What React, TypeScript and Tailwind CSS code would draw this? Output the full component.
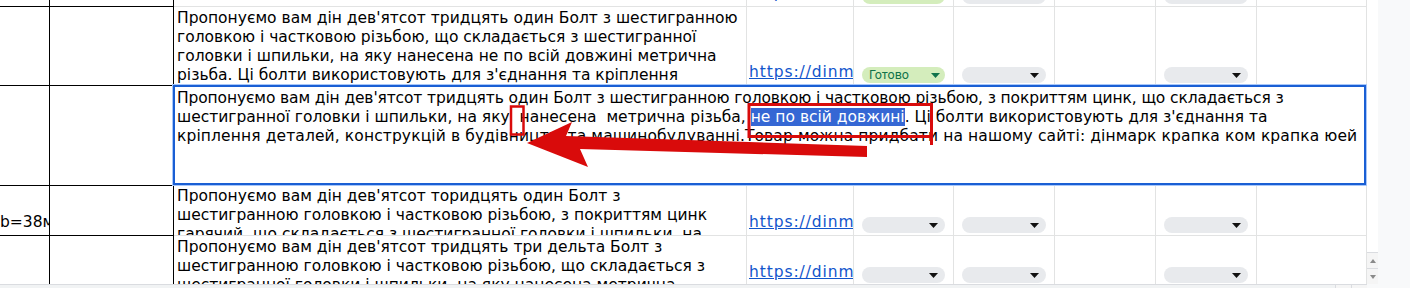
import React from "react";

const GRID = "border-[#e2e3e3]";

function GreenChip() {
  return (
    <div className="mx-[8px] mb-[2px] h-[16px] rounded-full bg-[#d4edbc] flex items-center justify-between pl-[7px] pr-[5px] font-['Roboto',sans-serif] text-[12.5px] leading-[16px] text-[#11734b]">
      <span>Готово</span>
      <svg width="9" height="5" viewBox="0 0 9 5">
        <path d="M0 0h9L4.5 5z" fill="#11734b" />
      </svg>
    </div>
  );
}

function GreyChip() {
  return (
    <div className="mx-[8px] mb-[2px] h-[16px] rounded-full bg-[#e8eaed] flex items-center justify-end pr-[7px]">
      <svg width="9" height="5" viewBox="0 0 9 5">
        <path d="M0 0h9L4.5 5z" fill="#111" />
      </svg>
    </div>
  );
}

type RowProps = {
  h: string;
  lines: string[];
  a?: string;
  green?: boolean;
  extra?: string;
  padTop?: string;
};

function Row({ h, lines, a, green, extra, padTop }: RowProps) {
  return (
    <div className={`flex shrink-0 ${h} ${extra ?? ""}`}>
      <div className="w-[50px] shrink-0 border-r border-b border-black overflow-hidden flex items-end pb-[3px]">
        {a ? <span className="whitespace-nowrap">{a}</span> : null}
      </div>
      <div className="w-[124px] shrink-0 border-r border-b border-black" />
      <div className={`w-[573px] shrink-0 border-r border-b ${GRID} overflow-hidden pl-[3px] ${padTop ?? "pt-[2px]"}`}>
        {lines.map((l, i) => (
          <div key={i} className="whitespace-pre">
            {l}
          </div>
        ))}
      </div>
      <div className={`w-[107px] shrink-0 border-r border-b ${GRID} overflow-hidden flex items-end pb-[3px] pl-[2px]`}>
        <span className="text-[#1155cc] underline whitespace-nowrap tracking-[0.9px]">https://dinmark.com.ua</span>
      </div>
      <div className={`w-[100px] shrink-0 border-r border-b ${GRID} flex flex-col justify-end`}>
        {green ? <GreenChip /> : <GreyChip />}
      </div>
      <div className={`w-[101px] shrink-0 border-r border-b ${GRID} flex flex-col justify-end`}>
        <GreyChip />
      </div>
      <div className={`w-[101px] shrink-0 border-r border-b ${GRID}`} />
      <div className={`w-[101px] shrink-0 border-r border-b ${GRID} flex flex-col justify-end`}>
        <GreyChip />
      </div>
      <div className={`w-[110px] shrink-0 border-r border-b ${GRID}`} />
    </div>
  );
}

export default function App() {
  return (
    <div className="relative w-[1410px] h-[288px] overflow-hidden bg-white text-black font-['DejaVu_Sans',sans-serif] text-[15.5px] leading-[19px]">
      <div className="flex h-[284px]">
        {/* sheet */}
        <div className="w-[1367px] shrink-0 overflow-hidden flex flex-col">
          <Row
            h="h-[79px]"
            extra="-mt-[72px]"
            green
            lines={[
              "Пропонуємо вам дін дев'ятсот тридцять один Болт з шестигранною",
              "головкою і частковою різьбою, що складається з шестигранної",
              "головки і шпильки, на яку нанесена не по всій довжині метрична",
            ]}
          />
          <Row
            h="h-[79px]"
            green
            lines={[
              "Пропонуємо вам дін дев'ятсот тридцять один Болт з шестигранною",
              "головкою і частковою різьбою, що складається з шестигранної",
              "головки і шпильки, на яку нанесена не по всій довжині метрична",
              "різьба. Ці болти використовують для з'єднання та кріплення",
              "деталей, конструкцій в будівництві та машинобудуванні.",
            ]}
          />
          {/* editing row */}
          <div className="flex shrink-0 h-[100px]">
            <div className="w-[50px] shrink-0 border-r border-b border-black" />
            <div className="w-[124px] shrink-0 border-r border-b border-black" />
            <div className={`w-[1193px] shrink-0 relative border-b ${GRID}`}>
              <div className="absolute -left-[2px] -top-[2px] right-0 -bottom-[1px] border border-[#a8c7fa] bg-white">
                <div className="h-full border-2 border-[#1a5fd4] pl-[2px] pt-[2px]">
                  <div className="whitespace-pre tracking-[-0.13px]">
                    Пропонуємо вам дін дев'ятсот тридцять один Болт з шестигранною головкою і частковою різьбою, з покриттям цинк, що складається з
                  </div>
                  <div className="whitespace-pre">
                    {"шестигранної головки і шпильки, на яку  нанесена  метрична різьба, "}
                    <span className="bg-[#3567d4] text-white">не по всій довжині</span>
                    {". Ці болти використовують для з'єднання та"}
                  </div>
                  <div className="whitespace-pre tracking-[0.11px]">
                    кріплення деталей, конструкцій в будівництві та машинобудуванні.Товар можна придбати на нашому сайті: дінмарк крапка ком крапка юей
                  </div>
                </div>
              </div>
            </div>
          </div>
          <Row
            h="h-[50px]"
            a="b=38мм"
            padTop="pt-[1px]"
            lines={[
              "Пропонуємо вам дін дев'ятсот торидцять один Болт з",
              "шестигранною головкою і частковою різьбою, з покриттям цинк",
              "гарячий, що складається з шестигранної головки і шпильки, на",
            ]}
          />
          <Row
            h="h-[50px]"
            lines={[
              "Пропонуємо вам дін дев'ятсот тридцять три дельта Болт з",
              "шестигранною головкою і частковою різьбою, що складається з",
              "шестигранної головки і шпильки, на яку нанесена метрична",
            ]}
          />
        </div>
        {/* vertical scrollbar */}
        <div className="w-[11px] shrink-0 flex flex-col justify-end bg-white">
          <div className="h-[16px] border-t border-[#dadce0] bg-[#f5f5f5] flex items-center justify-center">
            <svg width="6" height="4" viewBox="0 0 6 4">
              <path d="M0 4h6L3 0z" fill="#8a8a8a" />
            </svg>
          </div>
          <div className="h-[16px] border-t border-[#dadce0] bg-[#f5f5f5] flex items-center justify-center">
            <svg width="6" height="4" viewBox="0 0 6 4">
              <path d="M0 0h6L3 4z" fill="#8a8a8a" />
            </svg>
          </div>
        </div>
        <div className="flex-1 bg-[#f8f9fa]" />
      </div>
      {/* horizontal scrollbar */}
      <div className="flex h-[4px]">
        <div className="w-[1335px] shrink-0 border-t border-[#dadce0] bg-[#f1f3f4]" />
        <div className="w-[16px] shrink-0 border-t border-l border-[#dadce0] bg-[#f5f5f5]" />
        <div className="w-[16px] shrink-0 border-t border-l border-[#dadce0] bg-[#f5f5f5]" />
        <div className="flex-1 bg-[#f8f9fa]" />
      </div>

      {/* red annotation overlay */}
      <svg
        className="absolute inset-0 z-10 pointer-events-none"
        width="1410"
        height="288"
        viewBox="0 0 1410 288"
      >
        <rect x="511" y="106.5" width="12.5" height="28" fill="none" stroke="#d90b0b" strokeWidth="2.5" />
        <rect x="749" y="104.5" width="182.5" height="32" fill="none" stroke="#d90b0b" strokeWidth="3" />
        <line x1="931.5" y1="136" x2="931.5" y2="145" stroke="#d90b0b" strokeWidth="3" />
        <polygon
          points="527,143 572,122 566,136 867,146 867,157 580,149 588,167"
          fill="#d90b0b"
        />
      </svg>
    </div>
  );
}
